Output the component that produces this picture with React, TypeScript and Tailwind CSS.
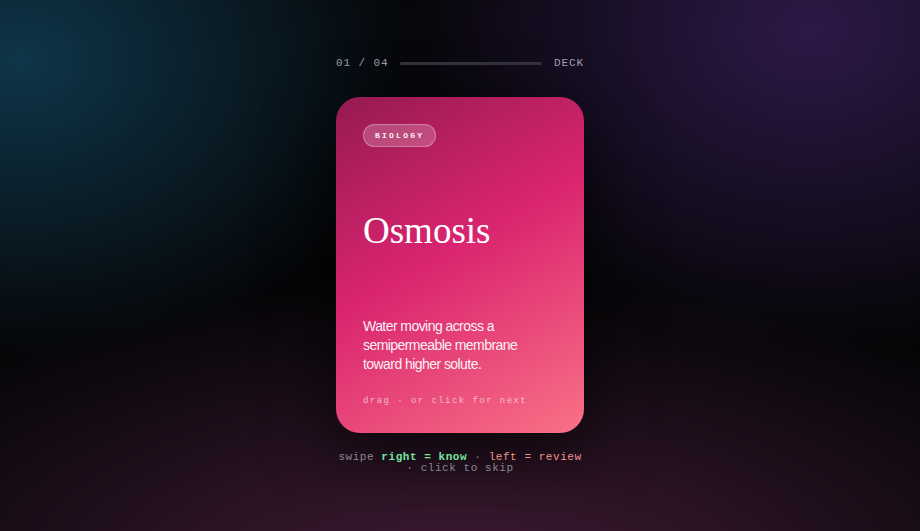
const MONO = "font-['Liberation_Mono','DejaVu_Sans_Mono',monospace]"

function DeckHeader() {
  return (
    <div className={`${MONO} flex w-[248px] items-center gap-3 text-[11px] leading-none tracking-[0.08em] text-[#a09ca8]`}>
      <span>01 / 04</span>
      <div className="h-[3px] flex-1 rounded-full bg-[#34323d]" />
      <span className="text-[#aaa3b3]">DECK</span>
    </div>
  )
}

function Card() {
  return (
    <div className="flex h-[336px] w-[248px] flex-col rounded-[24px] bg-[linear-gradient(150deg,#951a52_0%,#d9246f_45%,#fa7186_100%)] px-[27px] pt-[27px] pb-[27px] text-white shadow-[0_24px_70px_rgba(0,0,0,0.65)]">
      <span className={`${MONO} self-start rounded-full border border-white/30 bg-white/20 px-[11px] py-[6px] text-[8px] font-bold leading-[9px] tracking-[0.28em] text-white/95`}>
        BIOLOGY
      </span>
      <h1 className="mt-[65px] font-['Liberation_Serif','Times_New_Roman',serif] text-[37px] leading-none">
        Osmosis
      </h1>
      <p className="mt-auto font-['Liberation_Sans',Arial,sans-serif] text-[14px] leading-[19px] tracking-[-0.04em] text-white/95">
        Water moving across a semipermeable membrane toward higher solute.
      </p>
      <p className={`${MONO} mt-[23px] text-[9px] leading-none tracking-[0.16em] text-white/60`}>
        drag · or click for next
      </p>
    </div>
  )
}

export default function App() {
  return (
    <div className="flex min-h-screen w-full flex-col items-center justify-center bg-[#050507] bg-[radial-gradient(ellipse_400px_300px_at_20px_60px,rgba(16,62,84,0.85),transparent),radial-gradient(ellipse_420px_320px_at_810px_30px,rgba(52,28,82,0.85),transparent),radial-gradient(ellipse_700px_300px_at_460px_580px,rgba(72,30,60,0.9),transparent)]">
      <DeckHeader />
      <div className="mt-[28px]">
        <Card />
      </div>
      <p className={`${MONO} mt-[19px] w-[250px] text-center text-[11px] leading-[11px] tracking-[0.05em] text-[#8c8592]`}>
        swipe <b className="text-[#74e6a0]">right = know</b> · <span className="text-[#f29590]">left = review</span> · click to skip
      </p>
    </div>
  )
}
